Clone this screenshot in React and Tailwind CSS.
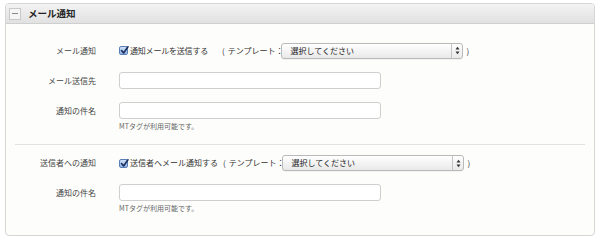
import React from "react";

const font = { fontFamily: '"Noto Sans CJK JP", "Noto Sans", sans-serif' };

function Check() {
  return (
    <span className="relative flex h-[9px] w-[9px] items-center justify-center rounded-[2px] border border-[#5a7fb8] bg-gradient-to-b from-[#cfe0f7] to-[#8fb3e6]">
      <svg width="9" height="9" viewBox="0 0 9 9" className="absolute -top-[1px] left-[0px]">
        <path d="M1.5 4.5 L3.6 7 L8 0.8" fill="none" stroke="#1b2f5a" strokeWidth="1.6" strokeLinecap="round" strokeLinejoin="round" />
      </svg>
    </span>
  );
}

function Select() {
  return (
    <div className="flex h-[16px] w-[182px] items-center rounded-[3px] border border-[#b9b9b9] bg-gradient-to-b from-[#ffffff] to-[#e9e9e9] shadow-[0_1px_0_rgba(0,0,0,0.04)]">
      <span className="ml-[8px] flex-1 text-[8px] leading-none text-[#222]">選択してください</span>
      <span className="flex h-full w-[11px] flex-col items-center justify-center gap-[1px] border-l border-[#c4c4c4]">
        <svg width="5" height="9" viewBox="0 0 5 9">
          <path d="M0.5 3.5 L2.5 0.8 L4.5 3.5 Z" fill="#333" />
          <path d="M0.5 5.5 L2.5 8.2 L4.5 5.5 Z" fill="#333" />
        </svg>
      </span>
    </div>
  );
}

function Input() {
  return <div className="h-[17px] w-[262px] rounded-[3px] border border-[#cfcfcf] bg-white" />;
}

function Label({ children }) {
  return <div className="w-[90px] shrink-0 text-right text-[8px] leading-none text-[#444]">{children}</div>;
}

export default function App() {
  return (
    <div className="h-[241px] w-[600px] bg-white pt-[3px] pl-[5px]" style={font}>
      <div className="h-[233px] w-[590px] rounded-[4px] border border-[#d6d6d4] bg-[#fdfdfb]">
        <div className="flex h-[20px] items-center rounded-t-[3px] border-b border-[#cfcfcf] bg-gradient-to-b from-[#f3f3f3] to-[#e1e1e1]">
          <span className="ml-[3px] flex h-[12px] w-[12px] items-center justify-center border border-[#c9c9c9] bg-[#f6f6f6]">
            <span className="h-[1px] w-[6px] bg-[#888]" />
          </span>
          <span className="ml-[7px] text-[9.5px] font-bold leading-none text-[#222]">メール通知</span>
        </div>

        <div className="mt-[19px] flex h-[15px] items-center">
          <Label>メール通知</Label>
          <div className="ml-[23px] flex items-center text-[8px] leading-none text-[#333]">
            <Check />
            <span className="ml-[2px] tracking-[-0.2px]">通知メールを送信する</span>
            <span className="ml-[14px]">(</span>
            <span className="ml-[3px]">テンプレート：</span>
            <span className="-ml-[2px]"><Select /></span>
            <span className="ml-[3px]">)</span>
          </div>
        </div>

        <div className="mt-[14px] flex h-[17px] items-center">
          <Label>メール送信先</Label>
          <div className="ml-[23px]"><Input /></div>
        </div>

        <div className="mt-[13px] flex h-[17px] items-center">
          <Label>通知の件名</Label>
          <div className="ml-[23px]"><Input /></div>
        </div>
        <div className="mt-[3px] pl-[113px] text-[7px] leading-[9px] text-[#666]">MTタグが利用可能です。</div>

        <div className="mx-[9px] mt-[13px] h-px bg-[#e2e2e0]" />

        <div className="mt-[10px] flex h-[16px] items-center">
          <Label>送信者への通知</Label>
          <div className="ml-[23px] flex items-center text-[8px] leading-none text-[#333]">
            <Check />
            <span className="ml-[2px]">送信者へメール通知する</span>
            <span className="ml-[5px]">(</span>
            <span className="ml-[3px]">テンプレート：</span>
            <span className="-ml-[2px]"><Select /></span>
            <span className="ml-[3px]">)</span>
          </div>
        </div>

        <div className="mt-[13px] flex h-[17px] items-center">
          <Label>通知の件名</Label>
          <div className="ml-[23px]"><Input /></div>
        </div>
        <div className="mt-[3px] pl-[113px] text-[7px] leading-[9px] text-[#666]">MTタグが利用可能です。</div>
      </div>
    </div>
  );
}
